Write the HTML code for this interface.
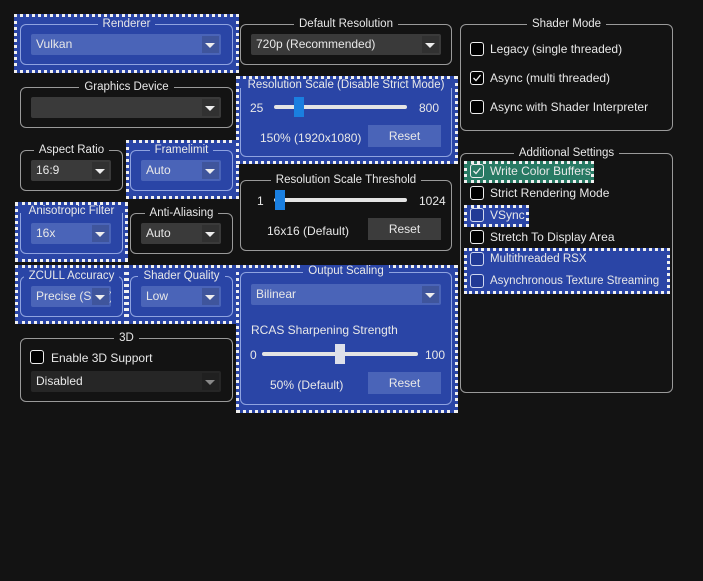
<!DOCTYPE html>
<html><head><meta charset="utf-8"><style>
*{box-sizing:border-box;margin:0;padding:0}
body{width:703px;height:581px;background:#131313;position:relative;overflow:hidden;font-family:"Liberation Sans",sans-serif;font-size:11.5px;color:#e8e8e8}
.a{position:absolute}
.hl{position:absolute;background:#2a45a6;border:3px dotted #f0f0f0}
.gb{position:absolute;border:1px solid #9a9a9a;border-radius:6px}
.hl .gb,.gbb{border-color:#8fa3e0}
.t{position:absolute;left:0;right:0;top:-8px;text-align:center;line-height:14px;font-size:11.5px;white-space:nowrap}
.t span{background:#131313;padding:0 5px}
.blue .t span{background:#2a45a6}
.cb{position:absolute;height:21px;background:#3a3a3a;border-radius:2px;line-height:21px;padding-left:5px;font-size:12px;white-space:nowrap;overflow:hidden}
.cbb{background:#4a64b8}
.cb:after{content:"";position:absolute;right:2px;top:2px;width:17px;height:17px;background:inherit;filter:brightness(0.85)}
.cb i{position:absolute;right:6px;top:9px;border-left:5px solid transparent;border-right:5px solid transparent;border-top:5px solid #eee;z-index:2}
.btn{position:absolute;height:22px;width:73px;background:#3c3c3c;text-align:center;line-height:22px;font-size:12px}
.btnb{background:#4a64b8}
.track{position:absolute;height:4px;background:#e4e4e4;border-radius:2px}
.hd{position:absolute;width:10px;height:20px;background:#1a7fe0}
.chk{position:absolute;width:14px;height:14px;border:1px solid #eee;border-radius:3px;background:#000}
.chkb{background:#213a96;border-color:#d0d8f0}
.chk svg{position:absolute;left:1px;top:1px}
.lbl{position:absolute;line-height:16px;white-space:nowrap;font-size:12px}
</style></head><body>

<!-- Renderer -->
<div class="hl blue" style="left:14px;top:14px;width:225px;height:59px"></div>
<div class="gb gbb blue" style="left:20px;top:24px;width:213px;height:41px"><div class="t"><span>Renderer</span></div></div>
<div class="cb cbb" style="left:31px;top:34px;width:190px">Vulkan<i></i></div>

<!-- Graphics device -->
<div class="gb" style="left:20px;top:87px;width:213px;height:41px"><div class="t"><span>Graphics Device</span></div></div>
<div class="cb" style="left:31px;top:97px;width:190px"><i></i></div>

<!-- Aspect -->
<div class="gb" style="left:20px;top:150px;width:103px;height:41px"><div class="t"><span>Aspect Ratio</span></div></div>
<div class="cb" style="left:31px;top:160px;width:80px">16:9<i></i></div>

<!-- Framelimit -->
<div class="hl" style="left:126px;top:140px;width:113px;height:59px"></div>
<div class="gb gbb blue" style="left:130px;top:150px;width:103px;height:41px"><div class="t"><span>Framelimit</span></div></div>
<div class="cb cbb" style="left:141px;top:160px;width:80px">Auto<i></i></div>

<!-- Aniso -->
<div class="hl" style="left:15px;top:202px;width:113px;height:60px"></div>
<div class="gb gbb blue" style="left:20px;top:213px;width:103px;height:41px;border-top:none;border-radius:0 0 6px 6px"></div>
<div class="a" style="left:20px;top:205px;width:103px;text-align:center;font-size:11.5px">Anisotropic Filter</div>
<div class="cb cbb" style="left:31px;top:223px;width:80px">16x<i></i></div>

<!-- AA -->
<div class="gb" style="left:130px;top:213px;width:103px;height:41px"><div class="t"><span>Anti-Aliasing</span></div></div>
<div class="cb" style="left:141px;top:223px;width:80px">Auto<i></i></div>

<!-- ZCULL -->
<div class="hl" style="left:15px;top:265px;width:112px;height:59px"></div>
<div class="gb gbb blue" style="left:20px;top:276px;width:103px;height:41px"><div class="t"><span>ZCULL Accuracy</span></div></div>
<div class="cb cbb" style="left:31px;top:286px;width:80px">Precise (Slow)<i></i></div>

<!-- Shader quality -->
<div class="hl" style="left:126px;top:265px;width:113px;height:59px"></div>
<div class="gb gbb blue" style="left:130px;top:276px;width:103px;height:41px"><div class="t"><span>Shader Quality</span></div></div>
<div class="cb cbb" style="left:141px;top:286px;width:80px">Low<i></i></div>

<!-- 3D -->
<div class="gb" style="left:20px;top:338px;width:213px;height:64px"><div class="t"><span>3D</span></div></div>
<div class="chk" style="left:30px;top:350px"></div>
<div class="lbl" style="left:51px;top:350px">Enable 3D Support</div>
<div class="cb" style="left:31px;top:371px;width:190px;background:#262626">Disabled<i style="border-top-color:#888"></i></div>

<!-- Default resolution -->
<div class="gb" style="left:240px;top:24px;width:212px;height:41px"><div class="t"><span>Default Resolution</span></div></div>
<div class="cb" style="left:251px;top:34px;width:190px">720p (Recommended)<i></i></div>

<!-- Resolution scale -->
<div class="hl" style="left:236px;top:76px;width:222px;height:88px"></div>
<div class="gb gbb" style="left:240px;top:88px;width:212px;height:69px;border-top:none;border-radius:0 0 6px 6px"></div>
<div class="a" style="left:240px;top:79px;width:212px;text-align:center;font-size:11.5px;white-space:nowrap">Resolution Scale (Disable Strict Mode)</div>
<div class="lbl" style="left:250px;top:100px">25</div>
<div class="track" style="left:274px;top:105px;width:133px"></div>
<div class="hd" style="left:294px;top:97px"></div>
<div class="lbl" style="left:419px;top:100px">800</div>
<div class="lbl" style="left:260px;top:130px">150% (1920x1080)</div>
<div class="btn btnb" style="left:368px;top:125px">Reset</div>

<!-- Threshold -->
<div class="gb" style="left:240px;top:180px;width:212px;height:71px"><div class="t"><span>Resolution Scale Threshold</span></div></div>
<div class="lbl" style="left:257px;top:193px">1</div>
<div class="track" style="left:274px;top:198px;width:133px"></div>
<div class="hd" style="left:275px;top:190px"></div>
<div class="lbl" style="left:419px;top:193px">1024</div>
<div class="lbl" style="left:267px;top:223px">16x16 (Default)</div>
<div class="btn" style="left:368px;top:218px">Reset</div>

<!-- Output scaling -->
<div class="hl" style="left:236px;top:265px;width:222px;height:148px"></div>
<div class="gb gbb blue" style="left:240px;top:272px;width:212px;height:133px"><div class="t" style="top:-9px"><span>Output Scaling</span></div></div>
<div class="cb cbb" style="left:251px;top:284px;width:190px">Bilinear<i></i></div>
<div class="lbl" style="left:251px;top:322px">RCAS Sharpening Strength</div>
<div class="lbl" style="left:250px;top:347px">0</div>
<div class="track" style="left:262px;top:352px;width:156px"></div>
<div class="hd" style="left:335px;top:344px;background:#dde0ea"></div>
<div class="lbl" style="left:425px;top:347px">100</div>
<div class="lbl" style="left:270px;top:377px">50% (Default)</div>
<div class="btn btnb" style="left:368px;top:372px">Reset</div>

<!-- Shader Mode -->
<div class="gb" style="left:460px;top:24px;width:213px;height:107px"><div class="t"><span>Shader Mode</span></div></div>
<div class="chk" style="left:470px;top:42px"></div><div class="lbl" style="left:490px;top:41px">Legacy (single threaded)</div>
<div class="chk" style="left:470px;top:71px"><svg width="10" height="10"><path d="M1.5 5 L4 7.5 L8.5 2" stroke="#eee" stroke-width="1.3" fill="none"/></svg></div><div class="lbl" style="left:490px;top:70px">Async (multi threaded)</div>
<div class="chk" style="left:470px;top:100px"></div><div class="lbl" style="left:490px;top:99px">Async with Shader Interpreter</div>

<!-- Additional -->
<div class="gb" style="left:460px;top:153px;width:213px;height:240px"><div class="t"><span>Additional Settings</span></div></div>
<div class="hl" style="left:464px;top:161px;width:130px;height:22px;background:#287a64"></div>
<div class="chk" style="left:470px;top:164px;background:#287a64"><svg width="10" height="10"><path d="M1.5 5 L4 7.5 L8.5 2" stroke="#eee" stroke-width="1.3" fill="none"/></svg></div><div class="lbl" style="left:490px;top:163px">Write Color Buffers</div>
<div class="chk" style="left:470px;top:186px"></div><div class="lbl" style="left:490px;top:185px">Strict Rendering Mode</div>
<div class="hl" style="left:464px;top:205px;width:65px;height:22px"></div>
<div class="chk chkb" style="left:470px;top:208px"></div><div class="lbl" style="left:490px;top:207px">VSync</div>
<div class="chk" style="left:470px;top:230px"></div><div class="lbl" style="left:490px;top:229px">Stretch To Display Area</div>
<div class="hl" style="left:464px;top:248px;width:206px;height:46px"></div>
<div class="chk chkb" style="left:470px;top:252px"></div><div class="lbl" style="left:490px;top:251px;font-size:11.5px">Multithreaded RSX</div>
<div class="chk chkb" style="left:470px;top:274px"></div><div class="lbl" style="left:490px;top:273px;font-size:11.5px">Asynchronous Texture Streaming</div>

</body></html>
